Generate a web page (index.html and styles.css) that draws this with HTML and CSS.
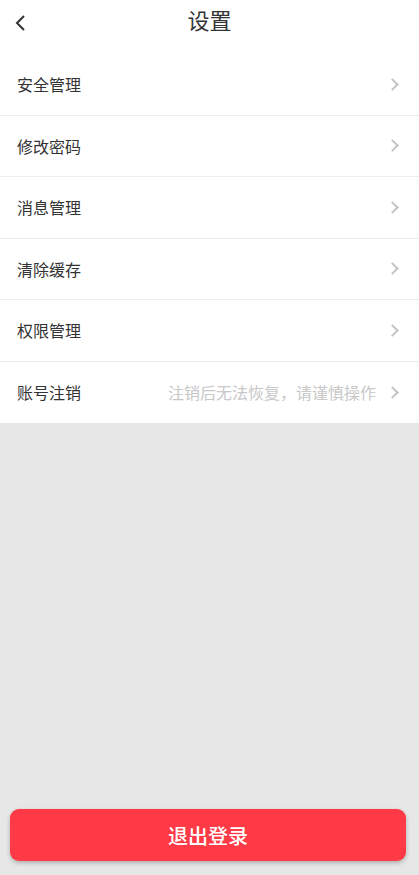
FILE: index.html
```html
<!DOCTYPE HTML>
<html lang="zh-CN">
<head>
    <meta charset="UTF-8">
    <meta name="viewport" content="width=device-width, initial-scale=1, user-scalable=no">
    <title>设置</title>
    <link rel="stylesheet" href="styles.css">
</head>
<body>

    <!-- 顶部导航 -->
    <div class="nav-bar">
        <span class="back">
            <svg width="14" height="18" viewBox="0 0 14 18"><path d="M11 2 L4 9 L11 16" fill="none" stroke="#333" stroke-width="2"/></svg>
        </span>
        <h1>设置</h1>
    </div>

    <!-- 设置列表 -->
    <div class="menu-list">
        <div class="menu-item"><span class="label">安全管理</span><span class="arrow"></span></div>
        <div class="menu-item"><span class="label">修改密码</span><span class="arrow"></span></div>
        <div class="menu-item"><span class="label">消息管理</span><span class="arrow"></span></div>
        <div class="menu-item"><span class="label">清除缓存</span><span class="arrow"></span></div>
        <div class="menu-item"><span class="label">权限管理</span><span class="arrow"></span></div>
        <div class="menu-item"><span class="label">账号注销</span><span class="hint">注销后无法恢复，请谨慎操作</span><span class="arrow"></span></div>
    </div>

    <div class="footer">
        <div class="logout-button">退出登录</div>
    </div>

</body>
</html>
```

FILE: styles.css
```css
* {
    box-sizing: border-box;
}
html, body {
    height: 100%;
}
body {
    margin: 0;
    background-color: #e7e7e7;
    font-family: "Noto Sans CJK SC", "Noto Sans", sans-serif;
    color: #333;
    display: flex;
    flex-direction: column;
}
.nav-bar {
    height: 54px;
    background: white;
    position: relative;
    display: flex;
    justify-content: center;
}
.nav-bar h1 {
    margin: 3px 0 0;
    font-size: 22px;
    line-height: 32px;
    font-weight: normal;
    color: #333;
}
.back {
    position: absolute;
    left: 13px;
    top: 13px;
}
.menu-list {
    background: white;
}
.menu-item {
    height: 61.5px;
    display: flex;
    align-items: center;
    padding: 0 22px 0 17px;
    border-bottom: 1px solid #ececec;
}
.menu-item:last-child {
    border-bottom: none;
}
.label {
    font-size: 16px;
    color: #333;
    flex: 1;
}
.hint {
    font-size: 16px;
    color: #c8c8c8;
    margin-right: 12px;
}
.arrow {
    width: 9px;
    height: 9px;
    border-top: 2px solid #c4c4c4;
    border-right: 2px solid #c4c4c4;
    transform: rotate(45deg);
}
.footer {
    flex: 1;
    display: flex;
    align-items: flex-end;
    padding: 0 13px 14px 10px;
}
.logout-button {
    width: 100%;
    height: 52px;
    background-color: #ff3a47;
    color: white;
    font-size: 20px;
    font-weight: 500;
    border-radius: 9px;
    display: flex;
    align-items: center;
    justify-content: center;
    box-shadow: 0 2px 4px rgba(0, 0, 0, 0.25);
}
```
